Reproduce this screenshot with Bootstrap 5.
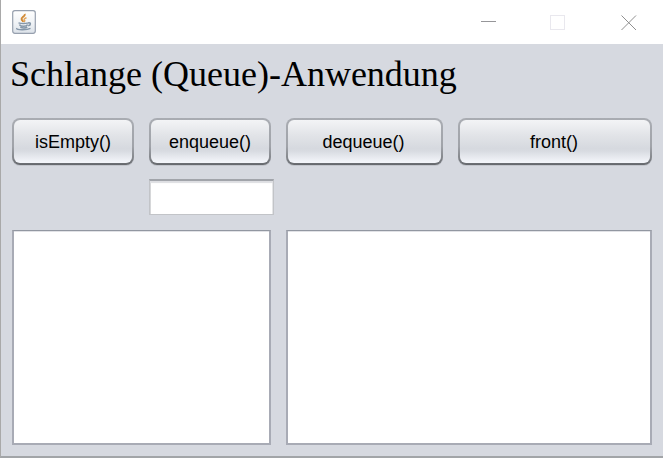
<!DOCTYPE html>
<html lang="de">
<head>
<meta charset="utf-8">
<title>Schlange (Queue)-Anwendung</title>
<link rel="stylesheet" href="https://cdn.jsdelivr.net/npm/bootstrap@5.3.0/dist/css/bootstrap.min.css">
<style>
body { width: 663px; height: 458px; overflow: hidden; background: #d6d9e0; }
.app-window { width: 663px; height: 458px; border-left: 1px solid #a9a9a9; border-bottom: 2px solid #a2a5a8; }
.title-bar { height: 44px; background: #fff; padding: 0 26px 0 11px; }
.window-controls { gap: 54px; }
.app-title { height: 66px; padding: 9px 0 0 9px; font: 36px/42px "Liberation Serif", serif; color: #000; white-space: nowrap; }
.app-grid { display: grid; grid-template-columns: 122px 122px 157px 194px; grid-template-rows: 46px 36px 215px; column-gap: 15px; row-gap: 15px; padding: 8px 0 0 11px; }
.btn-nimbus { --bs-btn-padding-x: 0; --bs-btn-padding-y: 0; height: 47px; font: 18px/44px "Liberation Sans", sans-serif; color: #000; border: 2px solid transparent; border-radius: 8px;
  background: linear-gradient(#f3f4f6 0%, #e2e4e8 35%, #d6d9df 66%, #d8dbe1 72%, #f3f5fa 98%) padding-box, linear-gradient(#a9acb2, #a0a3a9 60%, #84878c 85%, #64676c) border-box; box-shadow: 0 1px 0 #c2c5cc; }
.btn-nimbus:hover { color: #000; }
.btn-nimbus:nth-of-type(n+3) { padding-right: 2px; }
.field { width: 125px; height: 36px; border: 1px solid #c2c4c8; border-top: 2px solid #a1a4aa; border-radius: 0; box-shadow: inset 0 2px 1px #dddee2, inset 1px 0 0 #d5d6d9, inset -1px 0 0 #e5e6e8; padding: 0 6px; }
.area { height: 215px; border: 2px solid #a8abb5; border-top: 1px solid #9297a1; border-radius: 0; resize: none; box-shadow: inset 0 1px 0 #e1e2e6; }
.area:first-of-type { width: 259px; }
</style>
</head>
<body>
<main class="app-window d-flex flex-column">
  <header class="title-bar d-flex align-items-center justify-content-between flex-shrink-0">
    <svg width="24" height="24" viewBox="0 0 24 24" fill="none" aria-hidden="true">
      <defs><linearGradient id="tile" x2="0" y2="1"><stop stop-color="#fff"/><stop offset=".55" stop-color="#f0f3f6"/><stop offset="1" stop-color="#dce2e9"/></linearGradient></defs>
      <rect x=".7" y=".7" width="22.6" height="22.6" rx="2.2" fill="url(#tile)" stroke="#97a0ae" stroke-width="1.2"/>
      <path d="M12.600 4c1.200 2.200-4 3.400-3 5.500.4.900 1.500 1.400 1.500 2.500" stroke="#d18a35" stroke-width="1.900"/>
      <path d="M14.500 7.700c-2.200.7-3.300 1.900-1.800 3.100l-.8 1.300" stroke="#e2a65d" stroke-width="1.500"/>
      <path d="M6.500 12.900c3 .9 7 .8 9.900 0M7.500 14.500c1 2.400 7 2.400 8.100 0M16 13c3.300-.8 3 2.200.2 2.800M8.300 17.300c2 .8 5.300.7 7 0M4.800 18.200c-1 2 10 2.200 13.700.2" stroke="#8496a8" stroke-width="1.500"/>
    </svg>
    <svg width="156" height="15" viewBox="0 0 156 15" fill="none" shape-rendering="crispEdges" aria-hidden="true">
      <path d="M0 6.500h15" stroke="#969699"/>
      <rect x="69.500" y=".5" width="14" height="14" stroke="#e9e8ee"/>
      <path d="M140.500 .5l14.500 14.500M155 .5l-14.500 14.500" stroke="#8f8f8f" shape-rendering="auto"/>
    </svg>
  </header>
  <h1 class="app-title m-0 flex-shrink-0">Schlange (Queue)-Anwendung</h1>
  <section class="app-grid">
    <button class="btn btn-nimbus" type="button">isEmpty()</button>
    <button class="btn btn-nimbus" type="button">enqueue()</button>
    <button class="btn btn-nimbus" type="button">dequeue()</button>
    <button class="btn btn-nimbus" type="button">front()</button>
    <div></div>
    <input class="form-control field" type="text" aria-label="Element">
    <div></div>
    <div></div>
    <textarea class="form-control area" style="grid-column:span 2" aria-label="Schlange"></textarea>
    <textarea class="form-control area" style="grid-column:span 2" aria-label="Ausgabe"></textarea>
  </section>
</main>
<script src="https://cdn.jsdelivr.net/npm/bootstrap@5.3.0/dist/js/bootstrap.bundle.min.js"></script>
</body>
</html>
